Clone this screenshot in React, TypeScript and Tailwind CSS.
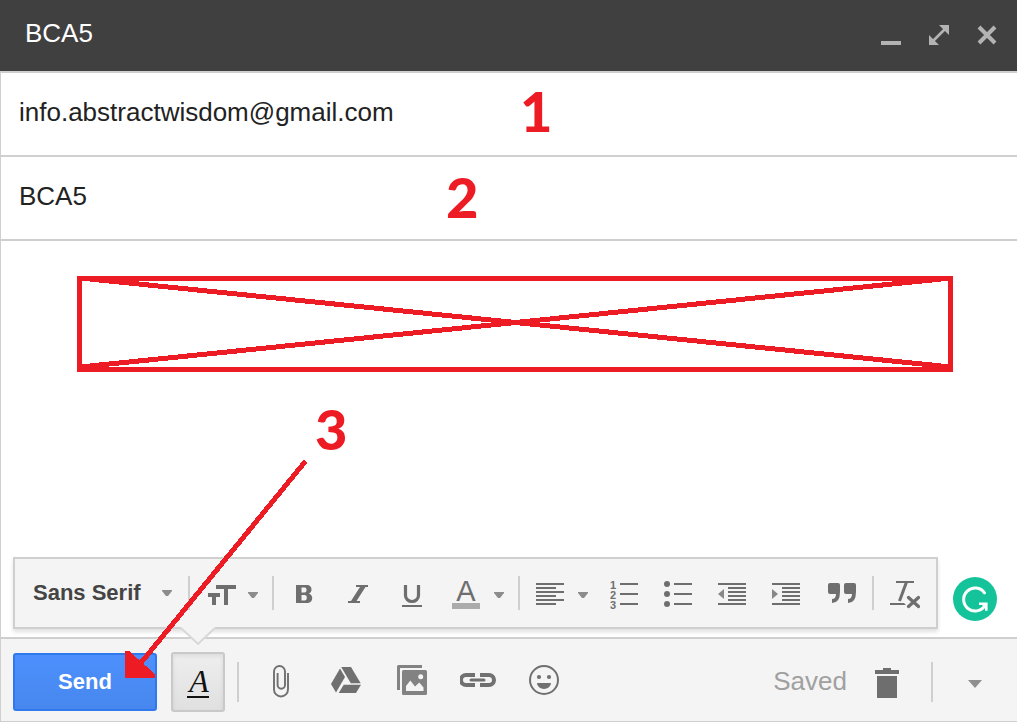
import type { ReactNode } from "react";

function Icon({ width = 28, children }: { width?: number; children: ReactNode }) {
  return (
    <svg width={width} height={36} viewBox={`0 0 ${width} 36`} fill="currentColor" className="shrink-0" aria-hidden="true">
      {children}
    </svg>
  );
}

function Caret() {
  return (
    <svg width="10" height="6" viewBox="0 0 10 6" className="shrink-0 text-[#8c8c8c]" fill="currentColor" aria-hidden="true">
      <path d="M0 0h10v1L6 6H4L0 1z" />
    </svg>
  );
}

function Divider({ tall = false }: { tall?: boolean }) {
  return <span className={tall ? "h-10 w-0.5 shrink-0 bg-[#cfcfcf]" : "h-[34px] w-0.5 shrink-0 bg-[#cfcfcf]"} />;
}

function ToolButton({ label, children }: { label: string; children: ReactNode }) {
  return (
    <button type="button" aria-label={label} className="flex h-full w-[54px] shrink-0 items-center justify-center">
      <Icon>{children}</Icon>
    </button>
  );
}

function FooterButton({ label, children }: { label: string; children: ReactNode }) {
  return (
    <button type="button" aria-label={label} className="flex h-full w-[66px] shrink-0 items-center justify-center pb-1 text-[#707070]">
      <Icon width={36}>{children}</Icon>
    </button>
  );
}

function TitleButton({ label, children }: { label: string; children: ReactNode }) {
  return (
    <button type="button" aria-label={label} className="flex h-full w-12 items-center justify-center text-[#b3b3b3]">
      <svg width="20" height="20" viewBox="0 0 20 20" fill="currentColor" aria-hidden="true">
        {children}
      </svg>
    </button>
  );
}

function TitleBar() {
  return (
    <header className="flex h-[71px] items-center justify-between bg-[#404040] pr-1.5 pb-1.5 pl-[25px]">
      <h1 className="text-[26px] leading-8 text-white">BCA5</h1>
      <div className="flex h-full items-center pt-1">
        <TitleButton label="Minimize">
          <path d="M0 16h20v4H0z" />
        </TitleButton>
        <TitleButton label="Full screen">
          <path d="M10 0h10v10zM0 10v10h10z" />
          <path d="M4 16 16 4" stroke="currentColor" strokeWidth="2.6" />
        </TitleButton>
        <TitleButton label="Close">
          <path d="m2 2 16 16m0-16L2 18" stroke="currentColor" strokeWidth="4" />
        </TitleButton>
      </div>
    </header>
  );
}

function Field({ label, value }: { label: string; value: string }) {
  return (
    <div className="flex h-[84px] border-b-2 border-[#cfcfcf]">
      <input aria-label={label} defaultValue={value} className="w-full bg-transparent pb-1 pl-[18px] text-[26px] text-[#222] outline-none" />
    </div>
  );
}

function FormatBar() {
  return (
    <div className="flex h-[72px] shrink-0 items-center border-2 border-[#cfcfcf] bg-[#f4f4f4] text-[#6e6e6e] shadow-[0_3px_4px_rgba(0,0,0,0.12)]">
      <div className="relative flex w-[173px] items-center">
        <select
          aria-label="Font"
          className="w-full appearance-none bg-transparent pl-[18px] text-[22px] leading-8 font-bold text-[#444] outline-none"
        >
          <option>Sans Serif</option>
        </select>
        <span className="pointer-events-none absolute right-4">
          <Caret />
        </span>
      </div>
      <Divider />
      <button type="button" aria-label="Size" className="flex h-full w-[82px] items-center gap-3 pl-[18px]">
        <Icon>
          <path d="M8 10h20v4h-8v16h-4V14H8z" />
          <path d="M0 18h12v4H8v8H4v-8H0z" />
        </Icon>
        <span className="pt-1">
          <Caret />
        </span>
      </button>
      <Divider />
      <div className="flex h-full pl-[3px]">
        <ToolButton label="Bold">
          <path
            fillRule="evenodd"
            d="M6 10h10.500c3.500 0 5 2 5 4.400 0 2-1 3.400-2.600 4 2 .6 3.300 2.200 3.300 4.600 0 3-2 5-5.700 5H6zM11.500 12.500v5h3c1.500 0 2-1 2-2.500s-.5-2.500-2-2.500zm0 7.500v5.500h3c1.700 0 2.300-1.200 2.300-2.700s-.6-2.800-2.300-2.800z"
          />
        </ToolButton>
        <ToolButton label="Italic">
          <path d="M12 10h12v2h-2.500l-9 14H16v2H4v-2h3l9-14h-4z" />
        </ToolButton>
        <ToolButton label="Underline">
          <path d="M7.500 10v10.500a6.500 6 0 0 0 13 0V10" fill="none" stroke="currentColor" strokeWidth="3.200" />
          <path d="M4 30h20v2H4z" />
        </ToolButton>
      </div>
      <button type="button" aria-label="Text color" className="flex h-full w-[79px] items-center gap-3.5 pl-[13px]">
        <Icon>
          <text x="14" y="26" textAnchor="middle" fontSize="29">
            A
          </text>
          <path d="M0 28h28v6H0z" fill="#ababab" />
        </Icon>
        <span className="pt-1">
          <Caret />
        </span>
      </button>
      <Divider />
      <button type="button" aria-label="Align" className="flex h-full w-[77px] items-center gap-3.5 pl-4">
        <Icon>
          <path d="M0 8h28v2H0zm0 4h20v2H0zm0 4h28v2H0zm0 4h20v2H0zm0 4h28v2H0zm0 4h20v2H0z" />
        </Icon>
        <span className="pt-1">
          <Caret />
        </span>
      </button>
      <ToolButton label="Numbered list">
        <g fontSize="11" fontWeight="700">
          <text x="0" y="14">1</text>
          <text x="0" y="24">2</text>
          <text x="0" y="34">3</text>
        </g>
        <path d="M10 8h18v2H10zm0 10h18v2H10zm0 10h18v2H10z" />
      </ToolButton>
      <ToolButton label="Bulleted list">
        <circle cx="3" cy="9" r="3" />
        <circle cx="3" cy="19" r="3" />
        <circle cx="3" cy="29" r="3" />
        <path d="M10 8h18v2H10zm0 10h18v2H10zm0 10h18v2H10z" />
      </ToolButton>
      <ToolButton label="Indent less">
        <path d="M0 8h28v2H0zm10 4h18v2H10zm0 4h18v2H10zm0 4h18v2H10zm0 4h18v2H10zM0 28h28v2H0z" />
        <path d="m0 19 6-5v10z" fill="#888" />
      </ToolButton>
      <ToolButton label="Indent more">
        <path d="M0 8h28v2H0zm10 4h18v2H10zm0 4h18v2H10zm0 4h18v2H10zm0 4h18v2H10zM0 28h28v2H0z" />
        <path d="m0 14 6 5-6 5z" fill="#888" />
      </ToolButton>
      <div className="flex h-full items-center gap-[3px] pl-0.5">
        <ToolButton label="Quote">
          <path d="M2 8h8q2 0 2 2v7q0 11-8 11v-4q4 0 4-5H2q-2 0-2-2v-7q0-2 2-2z" />
          <path d="M18 8h8q2 0 2 2v7q0 11-8 11v-4q4 0 4-5h-6q-2 0-2-2v-7q0-2 2-2z" />
        </ToolButton>
        <Divider />
      </div>
      <button type="button" aria-label="Remove formatting" className="flex h-full w-[62px] items-center pl-4">
        <Icon width={30}>
          <path d="M6 6h18v2H6zM0 28h14l2 2H0z" />
          <path d="M16.500 7 9.500 26" stroke="currentColor" strokeWidth="3" />
          <path d="m18.500 22.500 10 9m0-9-10 9" stroke="currentColor" strokeWidth="3.200" strokeLinecap="round" />
        </Icon>
      </button>
    </div>
  );
}

function GrammarBadge() {
  return (
    <button type="button" aria-label="Check grammar" className="mt-3 size-11 shrink-0">
      <svg width="44" height="44" viewBox="0 0 44 44" fill="none" aria-hidden="true">
        <circle cx="22" cy="22" r="22" fill="#15c39a" />
        <path d="M31.500 15.800A11.500 11.500 0 1 0 32 28.500" stroke="#fff" strokeWidth="3" strokeLinecap="round" />
        <path d="M26 26.700h7.300v7" stroke="#fff" strokeWidth="2.600" />
        <path d="M28 27h5.500v5.500z" fill="#fff" />
      </svg>
    </button>
  );
}

function Footer() {
  return (
    <footer className="flex h-[84px] items-center border-t-2 border-[#cfcfcf] bg-[#f4f4f4] pt-1 pl-3">
      <button
        type="button"
        className="h-[58px] w-36 shrink-0 rounded-[3px] border-2 border-[#3079ed] bg-linear-to-b from-[#4d90fe] to-[#4787ed] text-[22px] leading-8 font-bold text-white"
      >
        Send
      </button>
      <button
        type="button"
        aria-label="Formatting options"
        className="relative mx-3.5 flex h-[60px] w-[54px] shrink-0 items-center justify-center rounded-[3px] border-2 border-[#c9c9c9] bg-linear-to-b from-[#eee] to-[#e0e0e0] text-[#111] shadow-[inset_0_2px_4px_rgba(0,0,0,0.08)]"
      >
        <svg width="36" height="20" viewBox="0 0 36 20" className="absolute -top-[27px] left-[7px]" aria-hidden="true">
          <path d="M1 0v2l17 16L35 2V0z" fill="#f4f4f4" />
          <path d="m1 1 17 16L35 1" fill="none" stroke="#d8d8d8" strokeWidth="2" />
        </svg>
        <svg width="36" height="36" viewBox="0 0 36 36" fill="currentColor" aria-hidden="true">
          <text x="19" y="28" textAnchor="middle" fontSize="32" fontStyle="italic" className="font-['Liberation_Serif',serif]">
            A
          </text>
          <path d="M7 32h22v2H7z" />
        </svg>
      </button>
      <div className="-ml-0.5 flex h-full items-center gap-2">
        <Divider tall />
        <div className="flex h-full">
          <FooterButton label="Attach files">
            <path d="M26 11v16.500a7 7 0 0 1-14 0V9.500a5.500 5.500 0 0 1 11 0V23a3.700 3.700 0 0 1-7.400 0V11" fill="none" stroke="currentColor" strokeWidth="1.900" />
          </FooterButton>
          <FooterButton label="Insert from Drive">
            <path d="m12 6.500 5 8.500-9 15.500L3 22z" />
            <path d="M13.200 5h9.800l9.700 16.300h-9.900z" />
            <path d="M15.700 22.700H33L28 31H10.700z" />
          </FooterButton>
          <FooterButton label="Insert photo">
            <g fill="#828282">
              <path d="M4.500 3H28v3H6v22H3V4.500Q3 3 4.500 3z" />
              <rect x="8" y="8" width="25" height="25" rx="1.500" />
            </g>
            <path d="M12 29v-5l4.300-5.500 4.700 6 4.300-4 4.200 5V29z" fill="#f4f4f4" />
            <circle cx="26.700" cy="14.700" r="2.500" fill="#f4f4f4" />
          </FooterButton>
          <FooterButton label="Insert link">
            <path d="M15 13H6a5 5 0 0 0 0 10h9M20 13h9a5 5 0 0 1 0 10h-9" fill="none" stroke="currentColor" strokeWidth="4" />
            <path d="M11 18h13" stroke="currentColor" strokeWidth="3" strokeLinecap="round" />
          </FooterButton>
          <FooterButton label="Insert emoji">
            <circle cx="18" cy="18" r="14" fill="none" stroke="currentColor" strokeWidth="2" />
            <circle cx="13" cy="15" r="2.100" />
            <circle cx="23" cy="15" r="2.100" />
            <path d="M11 21h14a7 6 0 0 1-14 0z" />
          </FooterButton>
        </div>
      </div>
      <div className="ml-auto flex h-full items-center">
        <span className="pb-0.5 text-[26px] leading-8 text-[#a0a0a0]">Saved</span>
        <button type="button" aria-label="Discard draft" className="flex h-full w-[84px] items-center pl-[28px] text-[#6e6e6e]">
          <Icon width={24}>
            <path d="M8 4h8v2h8v4H0V6h8zM2 12h20v22H2z" />
          </Icon>
        </button>
        <Divider tall />
        <button type="button" aria-label="More options" className="flex h-full w-[84px] items-center justify-center text-[#8f8f8f]">
          <svg width="14" height="8" viewBox="0 0 14 8" fill="currentColor" className="mt-1" aria-hidden="true">
            <path d="M0 0h14L7 8z" />
          </svg>
        </button>
      </div>
    </footer>
  );
}

function Annotations() {
  return (
    <div className="pointer-events-none absolute top-0 left-0 font-['Lato',sans-serif] text-[56px] leading-[56px] font-black text-[#ed1c24]">
      <svg width="1017" height="722" viewBox="0 0 1017 722" fill="none" stroke="currentColor" strokeWidth="5" shapeRendering="crispEdges" aria-hidden="true">
        <rect x="79.500" y="278.500" width="871" height="91" />
        <path d="m80 278 871 89M80 367l871-89" strokeLinecap="round" />
        <path d="M304 463 140 664" strokeLinecap="round" />
        <path d="M125 651h4l26 23v4h-30z" fill="currentColor" stroke="none" />
      </svg>
      <span className="absolute top-[83px] left-[520px]">1</span>
      <span className="absolute top-[169px] left-[446px]">2</span>
      <span className="absolute top-[401px] left-[315px]">3</span>
    </div>
  );
}

export default function App() {
  return (
    <main className="relative min-h-screen bg-white pr-[7px] font-['Liberation_Sans',Arial,sans-serif]">
      <TitleBar />
      <form className="border-t-2 border-b border-l border-[#cfcfcf]" onSubmit={(e) => e.preventDefault()}>
        <Field label="To" value="info.abstractwisdom@gmail.com" />
        <Field label="Subject" value="BCA5" />
        <textarea
          aria-label="Message"
          className="block h-[316px] w-full resize-none bg-transparent px-[18px] py-4 text-[26px] text-[#222] outline-none"
        />
        <div className="flex items-center gap-[15px] pb-2 pl-3">
          <FormatBar />
          <GrammarBadge />
        </div>
        <Footer />
      </form>
      <Annotations />
    </main>
  );
}
